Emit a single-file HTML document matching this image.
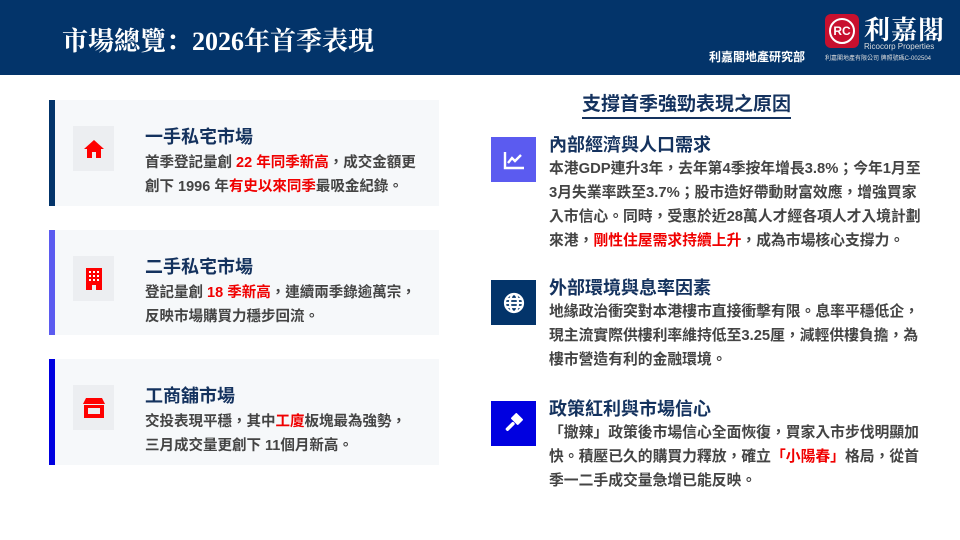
<!DOCTYPE html>
<html><head><meta charset="utf-8"><style>
*{margin:0;padding:0;box-sizing:border-box}
body{width:960px;height:540px;background:#fff;font-family:"Liberation Sans","Noto Sans CJK TC",sans-serif;position:relative;overflow:hidden}
.hdr{position:absolute;left:0;top:0;width:960px;height:75px;background:#03346a}
.ttl{position:absolute;left:62px;top:21px;color:#fff;font-family:"Liberation Serif","Noto Serif CJK SC",serif;font-size:26px;font-weight:bold}
.card{position:absolute;left:49px;width:390px;height:106px;background:#f6f8fa}
.card .bar{position:absolute;left:0;top:0;width:6px;height:100%}
.card .ib{position:absolute;left:24px;top:26px;width:41px;height:45px;background:#eceef1;display:flex;align-items:center;justify-content:center}
.card h3{position:absolute;left:96px;top:23px;font-size:18px;color:#14325e;font-weight:bold}
.card p{position:absolute;left:96px;top:51px;font-size:14.5px;line-height:24px;color:#444;font-weight:bold;white-space:nowrap}
.r{color:#f00000}
.sec{position:absolute;left:491px}
.sec .ib{position:absolute;left:0;top:0;width:45px;height:45px;display:flex;align-items:center;justify-content:center}
.sec h3{position:absolute;left:58px;top:-6px;font-size:18px;color:#14325e;font-weight:bold;white-space:nowrap}
.sec p{position:absolute;left:58px;top:20px;font-size:14.8px;line-height:24px;color:#444;font-weight:bold;white-space:nowrap}
</style></head><body>
<div class="hdr"></div>
<div class="ttl">市場總覽：2026年首季表現</div>
<div style="position:absolute;left:709px;top:48px;color:#fff;font-size:12px;font-weight:bold">利嘉閣地產研究部</div>
<div style="position:absolute;left:825px;top:14px;width:34px;height:34px;background:#c8102e;border-radius:6px;display:flex;align-items:center;justify-content:center"><div style="width:26px;height:26px;border:2px solid #fff;border-radius:50%;color:#fff;font-size:12px;font-weight:bold;text-align:center;line-height:22px">RC</div></div>
<div style="position:absolute;left:864px;top:10px;color:#fff;font-family:'Liberation Serif','Noto Serif CJK SC',serif;font-size:26px;font-weight:bold;letter-spacing:1px">利嘉閣</div>
<div style="position:absolute;left:864px;top:42px;color:#ddd;font-size:8px">Ricocorp Properties</div>
<div style="position:absolute;left:825px;top:53px;color:#ddd;font-size:6px;white-space:nowrap">利嘉閣地產有限公司 牌照號碼C-002504</div>

<div class="card" style="top:100px"><div class="bar" style="background:#03346a"></div>
<div class="ib"><svg width="22" height="20" viewBox="0 0 22 20"><path d="M11 1 L1 10 H4 V19 H9 V13 H13 V19 H18 V10 H21Z" fill="#f00"/></svg></div>
<h3>一手私宅市場</h3><p>首季登記量創 <span class="r">22 年同季新高</span>，成交金額更<br>創下 1996 年<span class="r">有史以來同季</span>最吸金紀錄。</p></div>

<div class="card" style="top:230px;height:105px"><div class="bar" style="background:#5b5bf0"></div>
<div class="ib"><svg width="16" height="22" viewBox="0 0 16 22"><path d="M0 0H16V22H10V17H6V22H0Z" fill="#f00"/><g fill="#fff"><rect x="3" y="3" width="2" height="2"/><rect x="7" y="3" width="2" height="2"/><rect x="11" y="3" width="2" height="2"/><rect x="3" y="7" width="2" height="2"/><rect x="7" y="7" width="2" height="2"/><rect x="11" y="7" width="2" height="2"/><rect x="3" y="11" width="2" height="2"/><rect x="7" y="11" width="2" height="2"/><rect x="11" y="11" width="2" height="2"/></g></svg></div>
<h3>二手私宅市場</h3><p>登記量創 <span class="r">18 季新高</span>，連續兩季錄逾萬宗，<br>反映市場購買力穩步回流。</p></div>

<div class="card" style="top:359px"><div class="bar" style="background:#0000e0"></div>
<div class="ib"><svg width="22" height="20" viewBox="0 0 22 20"><path d="M3 0H19L22 6H0Z" fill="#f00"/><path d="M1 7H21V20H1Z" fill="#f00"/><path d="M5 10H17V16H5Z" fill="#eceef1"/></svg></div>
<h3>工商舖市場</h3><p>交投表現平穩，其中<span class="r">工廈</span>板塊最為強勢，<br>三月成交量更創下 11個月新高。</p></div>

<div style="position:absolute;left:582px;top:92px;font-size:19px;font-weight:bold;color:#14325e;border-bottom:2px solid #14325e;line-height:25px;white-space:nowrap">支撐首季強勁表現之原因</div>

<div class="sec" style="top:137px"><div class="ib" style="background:#5b5bf0"><svg width="22" height="20" viewBox="0 0 22 20" fill="none" stroke="#fff" stroke-width="2.4"><path d="M2 2V18H21"/><path d="M5 13L9 8L12 11L18 5"/></svg></div>
<h3>內部經濟與人口需求</h3><p>本港GDP連升3年，去年第4季按年增長3.8%；今年1月至<br>3月失業率跌至3.7%；股市造好帶動財富效應，增強買家<br>入市信心。同時，受惠於近28萬人才經各項人才入境計劃<br>來港，<span class="r">剛性住屋需求持續上升</span>，成為市場核心支撐力。</p></div>

<div class="sec" style="top:280px"><div class="ib" style="background:#03346a"><svg width="22" height="22" viewBox="0 0 22 22" fill="none" stroke="#fff" stroke-width="2.2"><circle cx="11" cy="11" r="9"/><ellipse cx="11" cy="11" rx="4" ry="9"/><path d="M2 11H20M3 7H19M3 15H19"/></svg></div>
<h3>外部環境與息率因素</h3><p>地緣政治衝突對本港樓市直接衝擊有限。息率平穩低企，<br>現主流實際供樓利率維持低至3.25厘，減輕供樓負擔，為<br>樓市營造有利的金融環境。</p></div>

<div class="sec" style="top:401px"><div class="ib" style="background:#0000e0"><svg width="22" height="22" viewBox="0 0 22 22"><g fill="#fff"><rect x="9" y="2" width="10" height="8" rx="1" transform="rotate(45 14 6)"/><rect x="2" y="12" width="11" height="3.5" rx="1.5" transform="rotate(-45 7 14)"/></g></svg></div>
<h3>政策紅利與市場信心</h3><p>「撤辣」政策後市場信心全面恢復，買家入市步伐明顯加<br>快。積壓已久的購買力釋放，確立<span class="r">「小陽春」</span>格局，從首<br>季一二手成交量急增已能反映。</p></div>
</body></html>
